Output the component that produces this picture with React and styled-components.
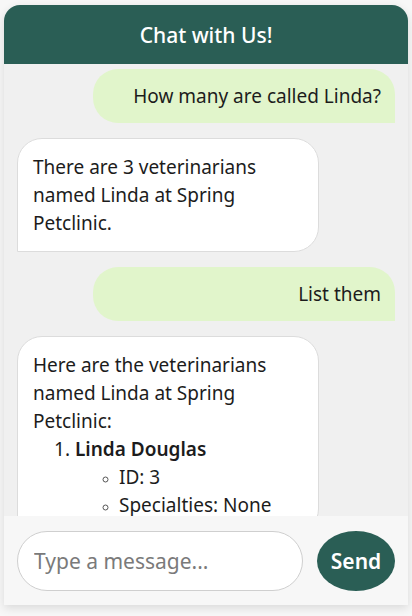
import React from 'react'
import styled, { createGlobalStyle } from 'styled-components'

const GlobalStyle = createGlobalStyle`
  html, body {
    margin: 0;
    padding: 0;
    background: #f7f7f7;
    font-family: "Noto Sans", "Open Sans", sans-serif;
  }
`

const Page = styled.div`
  height: 616px;
  padding: 5px 4px 0;
  box-sizing: border-box;
  background: #f7f7f7;
`

const Chat = styled.div`
  display: flex;
  flex-direction: column;
  height: 600px;
  border-radius: 16px 16px 0 0;
  overflow: hidden;
  box-shadow: 0 3px 10px rgba(0, 0, 0, 0.12);
`

const Header = styled.div`
  flex: 0 0 59px;
  display: flex;
  align-items: center;
  justify-content: center;
  background: #2a5e55;
  color: #fff;
  font-size: 21px;
  font-weight: 500;
`

const Messages = styled.div`
  flex: 1;
  overflow: hidden;
  background: #f0f0f0;
  padding: 5px 13px 0;
  display: flex;
  flex-direction: column;
  gap: 15px;
`

const Bubble = styled.div`
  width: 80%;
  box-sizing: border-box;
  flex-shrink: 0;
  font-size: 19px;
  color: #1c1c1c;
  line-height: 28px;
  border-radius: 25px;
  ${p => p.$user ? `
    align-self: flex-end;
    text-align: right;
    background: #e1f5cb;
    padding: 13px 14px;
    border-bottom-right-radius: 0;
  ` : `
    align-self: flex-start;
    background: #fff;
    border: 1px solid #dcdcdc;
    padding: 14px 15px;
    border-bottom-left-radius: 0;
  `}
`

const Name = styled.strong`
  font-weight: 600;
`

const List = styled.ol`
  margin: 0;
  padding-left: 42px;
`

const SubList = styled.ul`
  margin: 0;
  padding-left: 44px;
  list-style-type: circle;
  li::marker {
    font-size: 13px;
    color: #555;
  }
`

const InputBar = styled.div`
  flex: 0 0 89px;
  display: flex;
  align-items: center;
  gap: 14px;
  padding: 0 13px;
  background: #f7f7f7;
  box-sizing: border-box;
`

const Input = styled.input`
  flex: 1;
  min-width: 0;
  width: 100%;
  height: 60px;
  box-sizing: border-box;
  border: 1px solid #cfcfcf;
  border-radius: 30px;
  padding: 0 16px;
  font-family: inherit;
  font-size: 21px;
  color: #222;
  background: #fff;
  outline: none;
  &::placeholder {
    color: #7a7a7a;
  }
`

const SendButton = styled.button`
  flex: 0 0 78px;
  height: 60px;
  padding: 0;
  border: none;
  border-radius: 50%;
  background: #2a5e55;
  color: #fff;
  font-family: inherit;
  font-size: 21px;
  font-weight: 600;
`

export default function App () {
  return (
    <Page>
      <GlobalStyle />
      <Chat>
        <Header>Chat with Us!</Header>
        <Messages>
          <Bubble $user>How many are called Linda?</Bubble>
          <Bubble>There are 3 veterinarians named Linda at Spring Petclinic.</Bubble>
          <Bubble $user>List them</Bubble>
          <Bubble>
            Here are the veterinarians named Linda at Spring Petclinic:
            <List>
              <li>
                <Name>Linda Douglas</Name>
                <SubList>
                  <li>ID: 3</li>
                  <li>Specialties: None</li>
                </SubList>
              </li>
            </List>
          </Bubble>
        </Messages>
        <InputBar>
          <Input placeholder='Type a message...' />
          <SendButton>Send</SendButton>
        </InputBar>
      </Chat>
    </Page>
  )
}
